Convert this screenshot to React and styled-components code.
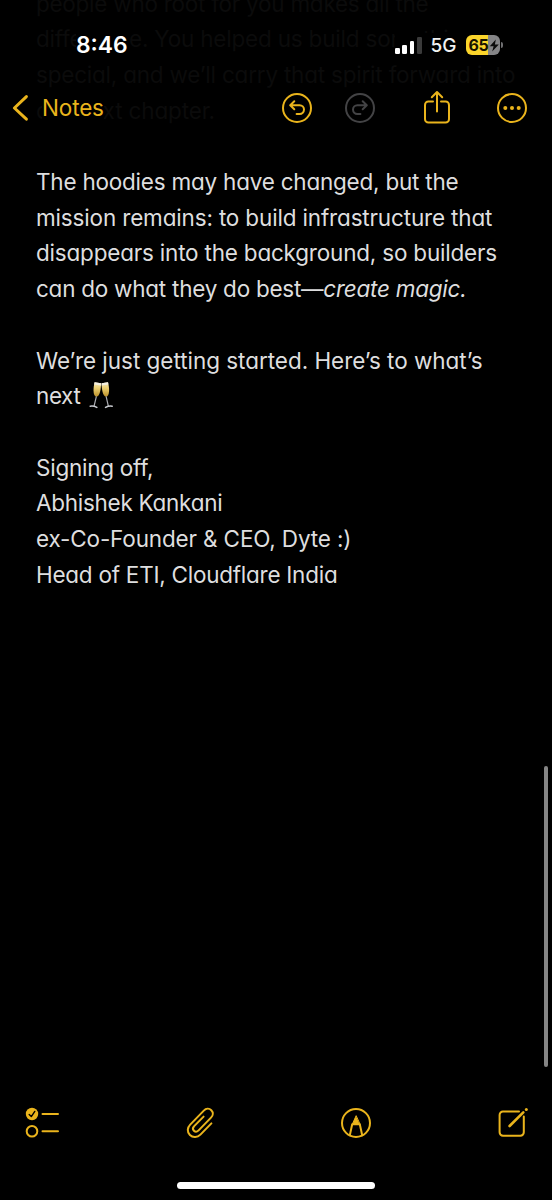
import { styled, createGlobalStyle } from "styled-components";

const faded = [
  { text: "people who root for you makes all the", track: -0.26 },
  { text: "difference. You helped us build something", track: -0.2 },
  { text: "special, and we’ll carry that spirit forward into", track: -0.21 },
  { text: "our next chapter.", track: -0.15 },
];

const App = () => {
  return (
    <Screen>
      <GlobalStyle />
      <Header>
        <StatusBar>
          <Time>8:46</Time>
          <Status>
            <Signal>
              <Bar $h={6} />
              <Bar $h={9} />
              <Bar $h={13} />
              <Bar $h={17} $off />
            </Signal>
            <Network>5G</Network>
            <BatteryWrap>
              <Battery>
                <Level>65</Level>
                <svg width="11" height="13" viewBox="0 0 11 13">
                  <path d="M6.8 0.4 0.8 7.3H4.6L3.2 12.6 9.8 5.6H5.9Z" fill="#0b0b0b" />
                </svg>
              </Battery>
              <Nub />
            </BatteryWrap>
          </Status>
        </StatusBar>
        <Nav>
          <Back>
            <Chevron />
            <BackLabel>Notes</BackLabel>
          </Back>
          <Actions>
            <Undo />
            <Redo />
            <Share />
            <More />
          </Actions>
        </Nav>
      </Header>
      <Note>
        <Paragraph $faded>
          {faded.map((line) => (
            <Line key={line.text} $track={line.track}>
              {line.text}
            </Line>
          ))}
        </Paragraph>
        <Paragraph>
          <Line $track={-0.22}>The hoodies may have changed, but the</Line>
          <Line $track={-0.16}>mission remains: to build infrastructure that</Line>
          <Line $track={-0.2}>disappears into the background, so builders</Line>
          <Line $track={-0.25}>
            can do what they do best—<em>create magic.</em>
          </Line>
        </Paragraph>
        <Paragraph>
          <Line $track={-0.03}>We’re just getting started. Here’s to what’s</Line>
          <Line $track={-0.4}>
            next <Glasses />
          </Line>
        </Paragraph>
        <Paragraph>
          <Line $track={-0.25}>Signing off,</Line>
          <Line $track={-0.27}>Abhishek Kankani</Line>
          <Line $track={-0.15}>ex-Co-Founder & CEO, Dyte :)</Line>
          <Line $track={-0.25}>Head of ETI, Cloudflare India</Line>
        </Paragraph>
      </Note>
      <ScrollBar />
      <Toolbar>
        <Checklist />
        <Clip />
        <Markup />
        <Compose />
      </Toolbar>
      <HomeIndicator />
    </Screen>
  );
};
export default App;

const Chevron = () => (
  <svg width="20" height="28" viewBox="0 0 20 28">
    <path d="M16.4 2.6 4.4 14 16.4 25.2" fill="none" stroke="#eab41c" strokeWidth="3" strokeLinecap="round" strokeLinejoin="round" />
  </svg>
);

const Undo = () => (
  <Icon $w={32} $h={32} $left={0} viewBox="0 0 32 32">
    <circle cx="16" cy="16" r="14" />
    <path d="M13.3 9.2 9.2 13.2 13.3 17.2M9.6 13.2H18.6A4.4 4.4 0 0 1 18.6 22H15.6" />
  </Icon>
);

const Redo = () => (
  <Icon $w={32} $h={32} $left={31} $dim viewBox="0 0 32 32">
    <circle cx="16" cy="16" r="14" />
    <path d="M18.7 9.2 22.8 13.2 18.7 17.2M22.4 13.2H13.4A4.4 4.4 0 0 0 13.4 22H16.4" />
  </Icon>
);

const Share = () => (
  <Icon $w={32} $h={36} $left={45} viewBox="0 0 32 36">
    <path d="M12 11.5H7.4A3.4 3.4 0 0 0 4 14.9V29.2A3.4 3.4 0 0 0 7.4 32.6H24.6A3.4 3.4 0 0 0 28 29.2V14.9A3.4 3.4 0 0 0 24.6 11.5H20" />
    <path d="M16 21.5V2.5M10.8 7.2 16 2 21.2 7.2" />
  </Icon>
);

const More = () => (
  <Icon $w={32} $h={32} $left={43} viewBox="0 0 32 32">
    <circle cx="16" cy="16" r="14" />
    <g fill="#eab41c" stroke="none">
      <circle cx="9.3" cy="16" r="2" />
      <circle cx="16" cy="16" r="2" />
      <circle cx="22.7" cy="16" r="2" />
    </g>
  </Icon>
);

const Checklist = () => (
  <Icon $w={36} $h={34} viewBox="0 0 36 34">
    <circle cx="8" cy="8" r="6.2" fill="#eab41c" stroke="none" />
    <path d="M5.2 8.4 7.3 10.6 10.8 5.4" stroke="#000" strokeWidth="1.4" />
    <circle cx="8" cy="25.2" r="5.3" />
    <path d="M18.5 8H34M18.5 25.2H34" />
  </Icon>
);

const Clip = () => (
  <Icon $w={32} $h={34} viewBox="0 0 32 34">
    <path d="M27.4 17.4 16.4 28.6C13.4 31.6 8.9 32 5.9 29 2.9 26 3.2 21.6 6.2 18.6L19.8 4.6C22 2.4 25.2 2.2 27.3 4.2 29.4 6.3 29.2 9.4 27 11.6L14.6 24.4C13.2 25.8 11.2 26 9.9 24.7 8.6 23.4 8.8 21.5 10.2 20.1L19.6 10.6" />
  </Icon>
);

const Markup = () => (
  <Icon $w={32} $h={34} viewBox="0 0 32 34">
    <circle cx="16" cy="17" r="14" />
    <path d="M9.8 29.2 12.2 18.2H19.8L22.2 29.2" />
    <path d="M16 10 12.2 18.5H19.8Z" fill="#eab41c" strokeWidth="1" />
  </Icon>
);

const Compose = () => (
  <Icon $w={32} $h={34} viewBox="0 0 32 34">
    <path d="M22 5.5H6A3.4 3.4 0 0 0 2.6 8.9V26.3A3.4 3.4 0 0 0 6 29.7H23.4A3.4 3.4 0 0 0 26.8 26.3V10.5" />
    <path d="M12.6 20 26.3 6.3" strokeWidth="2.6" />
    <circle cx="29.3" cy="3.4" r="1.5" fill="#eab41c" stroke="none" />
  </Icon>
);

const Glasses = () => (
  <Emoji width="24" height="28" viewBox="0 0 24 28" role="img" aria-label="clinking glasses">
    <defs>
      <linearGradient id="wine" x1="0" y1="0" x2="0" y2="1">
        <stop offset="0" stopColor="#f8ecc0" />
        <stop offset="0.4" stopColor="#ecd072" />
        <stop offset="1" stopColor="#b98e25" />
      </linearGradient>
    </defs>
    <path d="M5.6 1.2 12 2.2C12.2 7 10.8 15.4 7.6 15.8 3.4 15 4.3 6 5.6 1.2Z" fill="url(#wine)" />
    <path d="M19 1.2 12.6 2.2C12.4 7 13.8 15.4 17 15.8 21.2 15 20.3 6 19 1.2Z" fill="url(#wine)" />
    <path d="M5.6 1.2 12 2.2 11.9 4.4 5.2 3.4ZM19 1.2 12.6 2.2 12.7 4.4 19.4 3.4Z" fill="#f3efe2" />
    <path d="M7.4 15.4 5 25.4M17.1 15.4 19.4 25.4" stroke="#a9abb0" strokeWidth="1.2" />
    <path d="M1.2 25.2Q4.6 24.6 7.8 26.4M16.6 26.4Q20 24.6 23.2 25.2" stroke="#c9cbd0" strokeWidth="1.6" fill="none" strokeLinecap="round" />
  </Emoji>
);

const GlobalStyle = createGlobalStyle`
  body {
    margin: 0;
    background-color: #000;
  }
`;

const Screen = styled.div`
  position: relative;
  width: 552px;
  height: 1200px;
  display: flex;
  flex-direction: column;
  overflow: hidden;
  background-color: #000;
  font-family: Inter, "Liberation Sans", sans-serif;
`;

const Header = styled.header`
  position: absolute;
  top: 0;
  left: 0;
  width: 100%;
  height: 140px;
  z-index: 1;
`;

const StatusBar = styled.div`
  height: 30px;
  padding: 30px 49px 0 76px;
  display: flex;
  align-items: center;
  justify-content: space-between;
`;

const Time = styled.span`
  color: #fff;
  font-size: 22.8px;
  font-weight: 600;
  line-height: 30px;
  background-color: #000;
`;

const Status = styled.div`
  display: flex;
  align-items: center;
  background-color: #000;
`;

const Signal = styled.div`
  display: flex;
  align-items: flex-end;
  gap: 2.6px;
  height: 17px;
  margin-right: 9px;
`;

const Bar = styled.i`
  width: 4.7px;
  height: ${({ $h }) => $h}px;
  border-radius: 1.3px;
  background-color: ${({ $off }) => ($off ? "#3a3a3a" : "#fff")};
`;

const Network = styled.span`
  color: #f2f2f2;
  font-size: 19px;
  line-height: 24px;
  font-weight: 500;
  margin-right: 9px;
  padding-top: 1px;
`;

const BatteryWrap = styled.div`
  display: flex;
  align-items: center;
  gap: 1px;
`;

const Battery = styled.div`
  width: 34.5px;
  height: 19.5px;
  box-sizing: border-box;
  padding-left: 3px;
  display: flex;
  align-items: center;
  border-radius: 6px;
  background: linear-gradient(90deg, #fbd52b 66%, #858587 66%);
`;

const Level = styled.span`
  width: 20px;
  color: #161200;
  font-size: 16px;
  font-weight: 700;
  line-height: 20px;
  letter-spacing: -0.5px;
`;

const Nub = styled.i`
  width: 2px;
  height: 6px;
  border-radius: 0 2px 2px 0;
  background-color: #6f6f71;
`;

const Nav = styled.nav`
  height: 52px;
  padding: 22px 24px 0 10px;
  display: flex;
  justify-content: space-between;
`;

const Back = styled.div`
  height: 52px;
  display: flex;
  align-items: center;
  gap: 12px;
`;

const BackLabel = styled.span`
  color: #eab41c;
  font-size: 22.5px;
  line-height: 30px;
  letter-spacing: -0.15px;
  background-color: #000;
`;

const Actions = styled.div`
  height: 51px;
  display: flex;
  align-items: center;
`;

const Icon = styled.svg`
  display: block;
  flex: none;
  width: ${({ $w }) => $w}px;
  height: ${({ $h }) => $h}px;
  margin-left: ${({ $left }) => $left || 0}px;
  fill: none;
  stroke: ${({ $dim }) => ($dim ? "#434345" : "#eab41c")};
  stroke-width: 2;
  stroke-linecap: round;
  stroke-linejoin: round;
`;

const Note = styled.main`
  flex: 1;
  margin-top: -14.5px;
  padding: 0 36px;
`;

const Paragraph = styled.p`
  margin: 0 0 35.7px;
  color: ${({ $faded }) => ($faded ? "#0b0b0b" : "#dededf")};
  font-size: 22.5px;
  line-height: 35.7px;
  font-feature-settings: "cv11";
`;

const Line = styled.span`
  display: block;
  white-space: nowrap;
  letter-spacing: ${({ $track }) => $track || 0}px;
`;

const Emoji = styled.svg`
  margin-left: 3px;
  vertical-align: -5px;
`;

const ScrollBar = styled.i`
  position: absolute;
  top: 766px;
  right: 4px;
  width: 4px;
  height: 301px;
  border-radius: 2px;
  background-color: #858585;
`;

const Toolbar = styled.footer`
  height: 34px;
  padding: 0 23px 0 24px;
  margin-bottom: 42px;
  display: grid;
  grid-template-columns: 160px 155.5px 157.5px 32px;
  align-items: center;
`;

const HomeIndicator = styled.div`
  width: 198px;
  height: 7px;
  margin: 0 auto 11px;
  border-radius: 4px;
  background-color: #fff;
`;
